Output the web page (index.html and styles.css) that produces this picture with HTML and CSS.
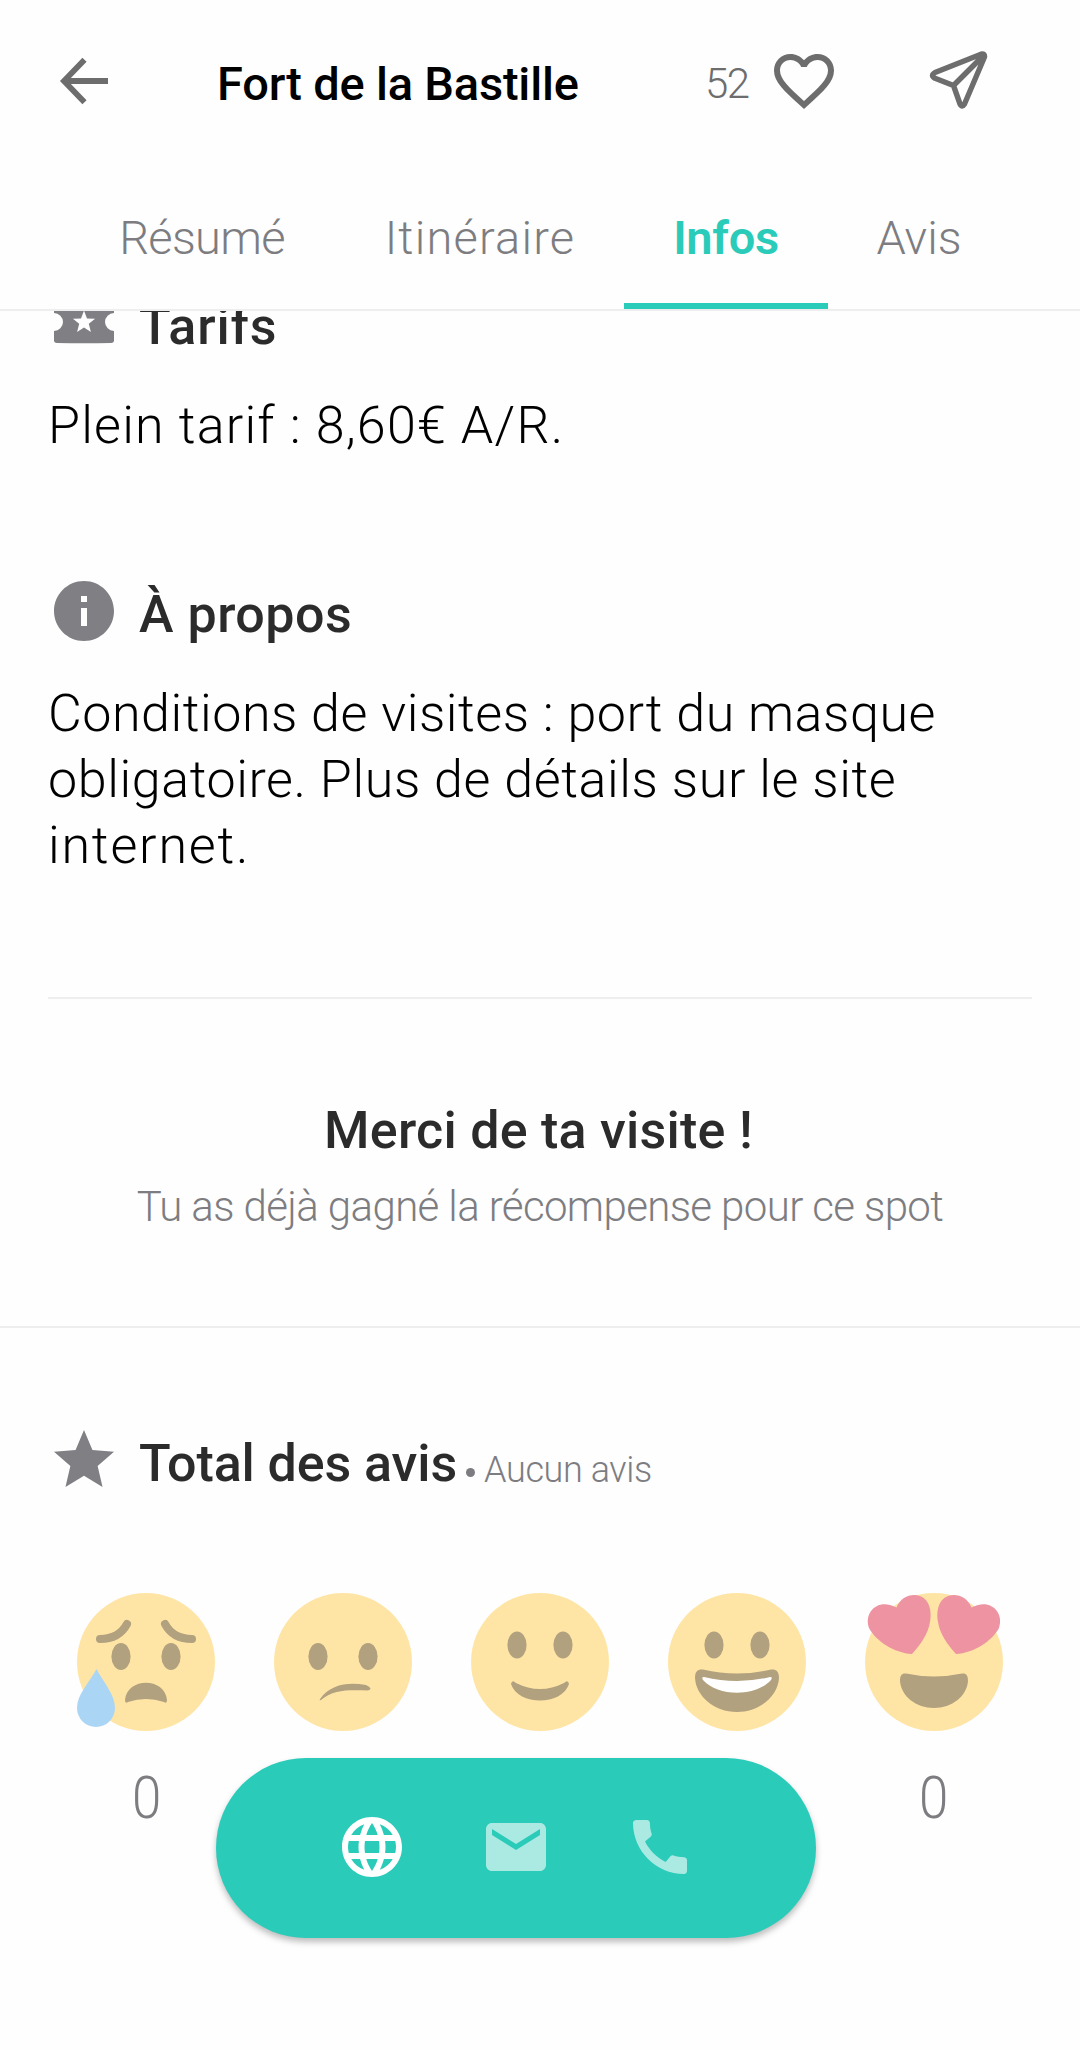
FILE: index.html
```html
<!DOCTYPE html>
<html lang="fr">
<head>
<meta charset="utf-8">
<title>Fort de la Bastille</title>
<link rel="stylesheet" href="styles.css">
</head>
<body>
<div class="app">
  <header class="topbar">
    <svg class="back" viewBox="0 0 72 72"><path d="M36.500 14.800 16 36l20.500 21.200M16 36h44" fill="none" stroke="#6d6d6d" stroke-width="5.800"/></svg>
    <h1 class="title"><span>Fort de la Bastille</span></h1>
    <span class="likes">52</span>
    <svg class="heart" viewBox="0 0 24 24"><path fill="#6d6d6d" d="M12.100 18.550l-.1.100-.11-.1C7.140 14.240 4 11.390 4 8.500 4 6.500 5.500 5 7.500 5c1.540 0 3.040 1 3.570 2.360h1.860C13.460 6 14.960 5 16.500 5c2 0 3.500 1.500 3.500 3.500 0 2.890-3.140 5.740-7.900 10.050M16.500 3c-1.740 0-3.410.810-4.500 2.080C10.910 3.810 9.240 3 7.500 3 4.420 3 2 5.410 2 8.500c0 3.770 3.400 6.860 8.550 11.530L12 21.350l1.450-1.320C18.600 15.360 22 12.270 22 8.500 22 5.410 19.580 3 16.500 3z"/></svg>
    <svg class="send" viewBox="0 0 60 60"><path d="M53 3.200 7 21.500q-5 3 0 5.800l18.500 7.200 6.500 18.500q2 4 4.500 0L56.500 6q.5-4-3.500-2.800ZM55 5 25.500 34.500" fill="none" stroke="#6d6d6d" stroke-width="5.400" stroke-linejoin="round"/></svg>
  </header>
  <nav class="tabs">
    <a class="tab resume"><span>Résumé</span></a>
    <a class="tab itin"><span>Itinéraire</span></a>
    <a class="tab active"><span>Infos</span></a>
    <a class="tab avis"><span>Avis</span></a>
  </nav>
  <main class="content">
    <section class="block tarifs">
      <h2><svg viewBox="0 0 24 24"><path d="M3 6h18q1 0 1 1v3a3 3 0 0 0 0 6v3.200q0 .8-1 .8-9 .2-18 0-1 0-1-.8V16a3 3 0 0 0 0-6V7q0-1 1-1zm9 3.200-1 2.600-2.700.1 2.100 1.700-.7 2.700 2.300-1.500 2.300 1.500-.7-2.700 2.100-1.700-2.700-.1z"/></svg><span class="t-tarifs">Tarifs</span></h2>
      <p><span class="l0">Plein tarif : 8,60€ A/R.</span></p>
    </section>
    <section class="block propos">
      <h2><svg viewBox="0 0 24 24"><path d="M12 2C6.480 2 2 6.480 2 12s4.480 10 10 10 10-4.480 10-10S17.520 2 12 2zm1 15h-2v-6h2v6zm0-8h-2V7h2v2z"/></svg><span class="t-propos">À propos</span></h2>
      <p><span class="l1">Conditions de visites : port du masque</span><br><span class="l2">obligatoire. Plus de détails sur le site</span><br><span class="l3">internet.</span></p>
    </section>
    <section class="thanks">
      <h2><span class="t-merci">Merci de ta visite !</span></h2>
      <p><span class="t-tu">Tu as déjà gagné la récompense pour ce spot</span></p>
    </section>
    <section class="block ratings">
      <h2><svg viewBox="0 0 24 24"><path d="M12 17.270 18.180 21l-1.640-7.030L22 9.240l-7.190-.61L12 2 9.190 8.630 2 9.240l5.460 4.730L5.820 21z"/></svg><span class="t-total">Total des avis</span><i class="dot"></i><small>Aucun avis</small></h2>
      <ul class="faces">
        <li>
          <svg viewBox="0 0 138 138"><circle class="skin" cx="69" cy="69" r="69"/><g class="feat"><ellipse cx="44" cy="63.500" rx="9.600" ry="13.500"/><ellipse cx="94" cy="63.500" rx="9.600" ry="13.500"/><path d="M48 107c2-23 40-23 42 0q0 4-3 2-18-6-36 0-3 2-3-2z"/></g><path class="brow" d="M23 46q19 0 27-15M115 46q-19 0-27-15"/><path class="tear" d="M19.500 76C26 89 38 101 38 115a19 19 0 0 1-38 0C0 101 13 89 19.500 76z"/></svg>
          <b>0</b>
        </li>
        <li>
          <svg viewBox="0 0 138 138"><circle class="skin" cx="69" cy="69" r="69"/><g class="feat"><ellipse cx="44" cy="63.500" rx="9.600" ry="13.500"/><ellipse cx="94" cy="63.500" rx="9.600" ry="13.500"/><path d="M46 106C57 91 74 89 92 92q8 4 2 5.500C75 97 60 96 47 107q-2 1-1-1z"/></g></svg>
          <b>0</b>
        </li>
        <li>
          <svg viewBox="0 0 138 138"><circle class="skin" cx="69" cy="69" r="69"/><g class="feat"><ellipse cx="46" cy="52" rx="9.600" ry="13.500"/><ellipse cx="92" cy="52" rx="9.600" ry="13.500"/><path d="M40 91q1-5 5-1 24 12 48 0 4-4 5 1c-7 22-51 22-58 0z"/></g></svg>
          <b>0</b>
        </li>
        <li>
          <svg viewBox="0 0 138 138"><circle class="skin" cx="69" cy="69" r="69"/><g class="feat"><ellipse cx="46" cy="52" rx="9.600" ry="13.500"/><ellipse cx="92" cy="52" rx="9.600" ry="13.500"/><path d="M27 85c0-7 3-9 8-8.500q34 8 68 0c5-.5 8 1.500 8 8.500-1 18-19 34-42 34S28 103 27 85z"/></g><path fill="#fff" d="M36 84q33 8 66 0 3 0 1 3c-15 17-53 17-68 0q-2-3 1-3z"/></svg>
          <b>0</b>
        </li>
        <li>
          <svg viewBox="0 0 138 138"><circle class="skin" cx="69" cy="69" r="69"/><g class="love"><path d="M47 61C29 60 11 48 4 35-1 20 11 8 25 12q4 1 6.500 2.500C36 3 47 0 55 3c10 4 12 16 10 26-2 12-9 22-18 32z"/><path d="M91 61c18-1 36-13 43-26 5-15-7-27-21-23q-4 1-6.500 2.500C102 3 91 0 83 3 73 7 71 19 73 29c2 12 9 22 18 32z"/></g><path class="feat" d="M35 88c0-6 2-8 6-7.500q28 6 56 0c4-.5 6 1.500 6 7.500-1 15-16 27-34 27S36 103 35 88z"/></svg>
          <b>0</b>
        </li>
      </ul>
    </section>
  </main>
  <div class="actions">
    <svg viewBox="0 0 24 24"><path d="M11.990 2C6.470 2 2 6.480 2 12s4.470 10 9.990 10C17.520 22 22 17.520 22 12S17.520 2 11.990 2zm6.930 6h-2.950c-.32-1.250-.78-2.450-1.380-3.560 1.840.63 3.370 1.910 4.330 3.560zM12 4.040c.83 1.200 1.480 2.530 1.910 3.960h-3.820c.43-1.430 1.080-2.760 1.910-3.960zM4.260 14C4.100 13.360 4 12.690 4 12s.1-1.360.26-2h3.380c-.08.660-.14 1.320-.14 2s.06 1.340.14 2H4.260zm.82 2h2.950c.32 1.250.78 2.450 1.380 3.560-1.840-.63-3.370-1.900-4.330-3.560zm2.950-8H5.080c.96-1.660 2.490-2.930 4.330-3.560C8.810 5.550 8.350 6.750 8.030 8zM12 19.960c-.83-1.200-1.480-2.530-1.910-3.960h3.820c-.43 1.430-1.080 2.760-1.910 3.960zM14.340 14H9.660c-.09-.66-.16-1.320-.16-2s.07-1.350.16-2h4.680c.09.650.16 1.320.16 2s-.07 1.340-.16 2zm.25 5.560c.6-1.110 1.060-2.310 1.380-3.560h2.950c-.96 1.650-2.490 2.930-4.330 3.560zM16.360 14c.08-.66.14-1.320.14-2s-.06-1.340-.14-2h3.380c.16.640.26 1.310.26 2s-.1 1.360-.26 2h-3.380z"/></svg>
    <svg class="off" viewBox="0 0 24 24"><path d="M20 4H4c-1.100 0-1.990.9-1.990 2L2 18c0 1.100.9 2 2 2h16c1.100 0 2-.9 2-2V6c0-1.100-.9-2-2-2zm0 4l-8 5-8-5V6l8 5 8-5v2z"/></svg>
    <svg class="off" viewBox="0 0 24 24"><path d="M20.010 15.380c-1.230 0-2.420-.2-3.530-.56-.35-.12-.74-.03-1.010.24l-1.570 1.970c-2.830-1.350-5.480-3.900-6.890-6.830l1.950-1.660c.27-.28.35-.67.240-1.020-.37-1.110-.56-2.300-.56-3.530 0-.54-.45-.99-.99-.99H4.190C3.650 3 3 3.240 3 3.990 3 13.280 10.730 21 20.010 21c.71 0 .99-.63.990-1.180v-3.450c0-.54-.45-.99-.99-.99z"/></svg>
  </div>
</div>
</body>
</html>
```
FILE: styles.css
```css
* { box-sizing: border-box; margin: 0; padding: 0; }
body { background: #fefefe; font-family: Roboto, "Liberation Sans", sans-serif; color: #000; }
svg { display: block; flex: none; }
.app { position: relative; width: 1080px; height: 2049px; overflow: hidden; white-space: nowrap; }

.topbar { display: flex; align-items: center; height: 162px; padding-left: 48px; }
.back { width: 72px; height: 72px; }
.title { width: 488px; margin: 6px 0 0 97px; font-size: 47px; font-weight: 500; line-height: 56px; letter-spacing: -.2px; }
.likes { width: 63px; margin-top: 5px; font-size: 42px; font-weight: 300; line-height: 50px; letter-spacing: -1.5px; color: #6d6d6d; }
.heart { width: 72px; height: 72px; }
.send { width: 60px; height: 60px; margin-left: 88px; }

.tabs { display: flex; justify-content: center; height: 149px; border-bottom: 2px solid #eee; }
.tab { display: flex; justify-content: center; height: 147px; padding-top: 48px; border-bottom: 0 solid #2bcbba; font-size: 47px; font-weight: 300; line-height: 56px; color: #7d7d81; }
.resume { width: 268px; letter-spacing: -.7px; }
.itin { width: 288px; letter-spacing: 1.2px; }
.avis { width: 184px; padding-right: 2px; }
.active { width: 204px; border-bottom-width: 6px; font-weight: 600; color: #2bcbba; letter-spacing: -.3px; }

.content { height: 1738px; overflow: hidden; }
h2 { font-size: 52px; font-weight: 500; line-height: 72px; color: #2b2b2b; }
.block h2 { display: flex; align-items: center; height: 72px; padding-left: 48px; }
.block h2 span { padding-top: 8px; }
.block h2 svg { width: 72px; height: 72px; margin-right: 19px; fill: #7f7f84; }
.block p { padding-left: 48px; font-size: 52px; font-weight: 300; line-height: 66px; }
.tarifs { margin-top: -28px; }
.tarifs p { margin-top: 38px; }
.propos { margin-top: 116px; }
.propos p { margin-top: 34px; }
.block h2 .t-tarifs { padding-top: 16px; letter-spacing: .9px; }
.t-propos { letter-spacing: .5px; }
.t-total { letter-spacing: -.1px; }
.l0 { letter-spacing: 1.2px; }
.l1 { letter-spacing: .53px; }
.l2 { letter-spacing: .59px; }
.l3 { letter-spacing: 1.8px; }
.thanks { height: 331px; margin-top: 118px; text-align: center; border-bottom: 2px solid #eee; }
.thanks::before { content: ""; display: block; height: 2px; margin: 0 48px 96px; background: #eee; }
.t-merci { padding-right: 3px; letter-spacing: .25px; }
.thanks p { margin-top: 12px; font-size: 42px; font-weight: 300; line-height: 56px; letter-spacing: -.62px; color: #7d7d81; }
.ratings { padding-top: 96px; }
.dot { width: 9px; height: 9px; margin: 24px 9px 0; border-radius: 50%; background: #7d7d81; }
small { padding-top: 19px; font-size: 36px; font-weight: 300; letter-spacing: -.4px; color: #7d7d81; }
.faces { display: grid; grid-template-columns: repeat(5, 1fr); margin: 97px 48px 0; list-style: none; }
.faces li { display: flex; flex-direction: column; align-items: center; }
.faces svg { width: 138px; height: 138px; overflow: visible; }
.faces b { margin-top: 32px; font-size: 60px; font-weight: 300; line-height: 70px; color: #7d7d81; transform: scaleX(.88); }
.skin { fill: #ffe5a5; }
.feat { fill: #b1a17e; }
.brow { fill: none; stroke: #b1a17e; stroke-width: 8; stroke-linecap: round; }
.tear { fill: #abd5f5; }
.love { fill: #ed93a1; }

.actions { position: absolute; left: 216px; top: 1758px; display: flex; justify-content: center; align-items: center; gap: 72px; width: 600px; height: 180px; padding-bottom: 2px; border-radius: 90px; background: #2bcbba; box-shadow: 0 4px 6px rgba(0, 0, 0, .26); }
.actions svg { width: 72px; height: 72px; fill: #fff; }
.actions .off { opacity: .6; }
```
